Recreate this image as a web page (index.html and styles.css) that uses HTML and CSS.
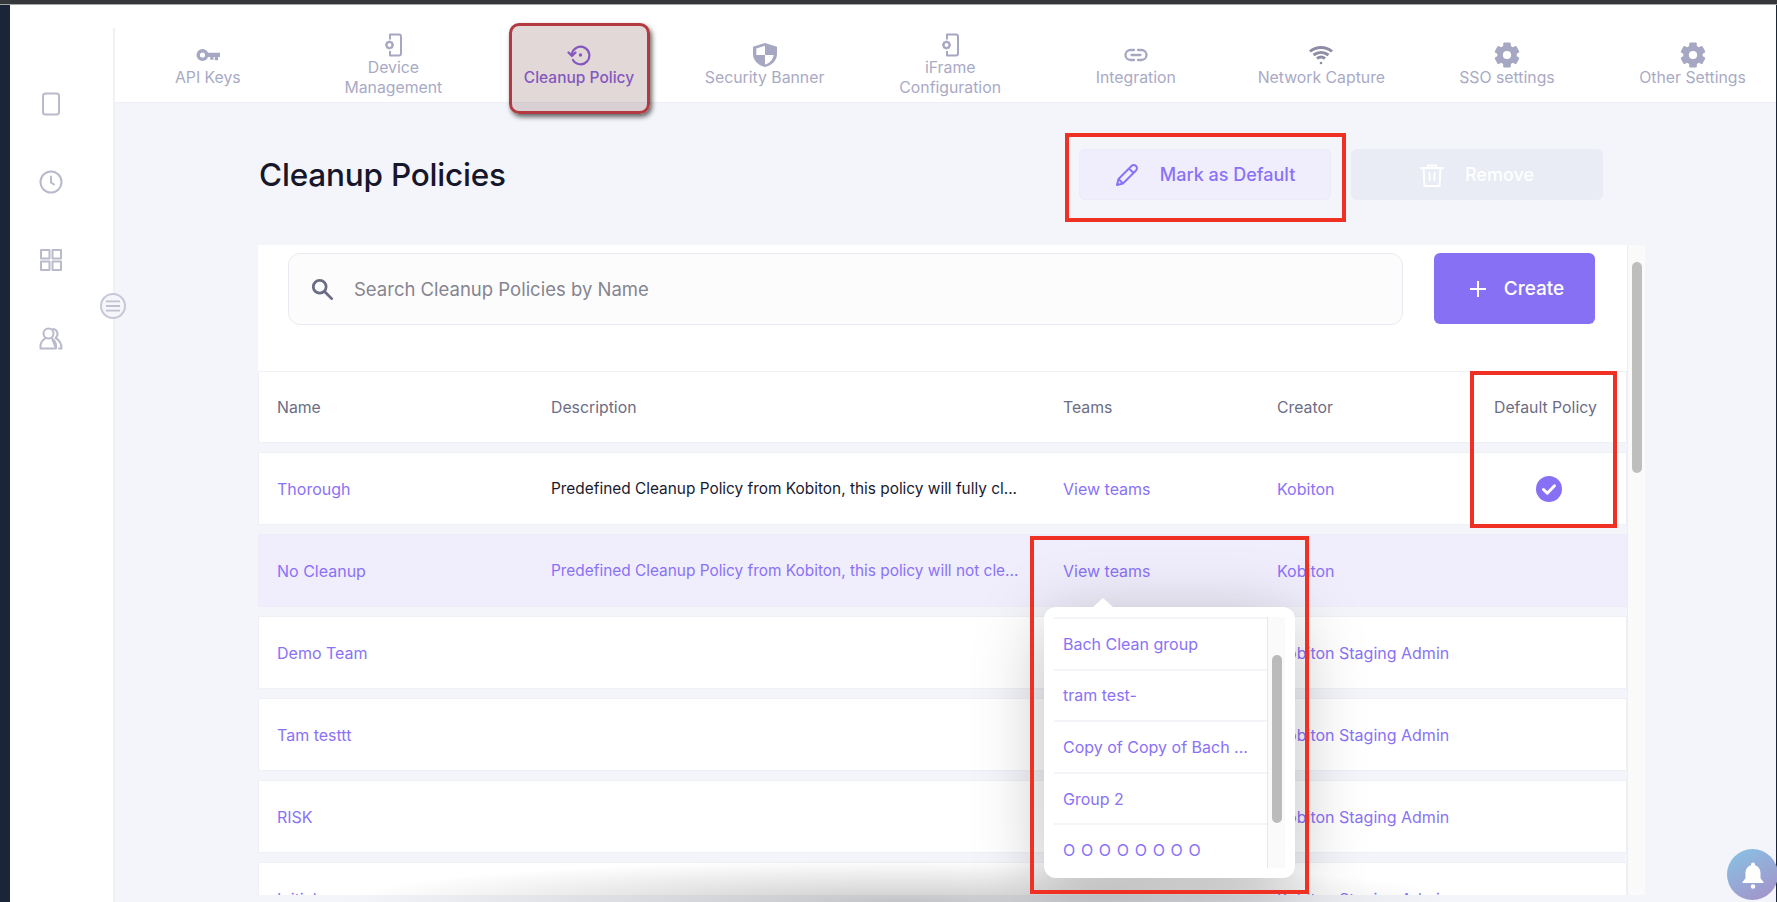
FILE: index.html
```html
<!DOCTYPE html>
<html lang="en">
<head>
<meta charset="utf-8">
<title>Cleanup Policies</title>
<link rel="stylesheet" href="styles.css">
</head>
<body>
<svg class="defs" width="0" height="0" aria-hidden="true">
  <symbol id="gear" viewBox="0 0 24 24">
    <circle cx="12" cy="12" r="9"/>
    <rect x="8.500" y="0.500" width="7" height="23" rx="1.200"/>
    <rect x="8.500" y="0.500" width="7" height="23" rx="1.200" transform="rotate(60 12 12)"/>
    <rect x="8.500" y="0.500" width="7" height="23" rx="1.200" transform="rotate(120 12 12)"/>
    <circle cx="12" cy="12" r="3.800" fill="#fff"/>
  </symbol>
  <symbol id="device" viewBox="0 0 20 24">
    <path d="M7 1.500h9a2 2 0 0 1 2 2v17a2 2 0 0 1-2 2H7" fill="none" stroke="currentColor" stroke-width="2" stroke-linecap="round"/>
    <path d="M7 1.500v5M7 18v4.500" fill="none" stroke="currentColor" stroke-width="2"/>
    <circle cx="6.500" cy="12" r="3" fill="none" stroke="currentColor" stroke-width="2.200"/>
    <path d="M6.500 7.500v1.500M6.500 15v1.500M2 12h1.500M9.500 12H11M3.400 8.900l1 1M8.600 14.100l1 1M3.400 15.100l1-1M8.600 9.900l1-1" stroke="currentColor" stroke-width="1.500"/>
  </symbol>
</svg>
<div class="frame">
  <div class="topbar"></div>
  <div class="body">
    <div class="edge"></div>
    <aside class="rail">
      <svg class="rail-icon" viewBox="0 0 24 24"><rect x="4" y="1.500" width="16" height="21" rx="2.500"/></svg>
      <svg class="rail-icon" viewBox="0 0 24 24"><circle cx="12" cy="12" r="10.500"/><path d="M12 6.500V12.500l3 2"/></svg>
      <svg class="rail-icon" viewBox="0 0 24 24"><rect x="2" y="2" width="8.500" height="8.500"/><rect x="13.500" y="2" width="8.500" height="8.500"/><rect x="2" y="13.500" width="8.500" height="8.500"/><rect x="13.500" y="13.500" width="8.500" height="8.500"/></svg>
      <svg class="rail-icon" viewBox="0 0 24 24"><circle cx="9.500" cy="7.500" r="5"/><path d="M1.500 22.500v-2.500c0-4 3-6.500 4.500-7.500M13 12.500c1.500 1 4 3.500 4 7.500v2.500zM1.500 22.500H17"/><path d="M14 3a5 5 0 0 1 2.500 9c3 1.500 6 4 6 10.500H20"/></svg>
    </aside>
    <main class="main">
      <div class="shell">
        <nav class="nav">
          <div class="tab">
            <svg class="tab-icon key" viewBox="0 0 24 14"><circle cx="6.500" cy="7" r="4.300"/><path d="M10.500 4.800h13.500v4.200h-2v3.300h-3.200V9h-1.300v2.800h-3.200V9h-3.800z" class="solid"/></svg>
            <span>API Keys</span>
          </div>
          <div class="tab">
            <svg class="tab-icon dev"><use href="#device"/></svg>
            <span>Device<br>Management</span>
          </div>
          <div class="tab tab-active">
            <svg class="tab-icon hist" viewBox="0 0 24 24"><path d="M5 10.500a8.800 8.800 0 1 1 1 6.500"/><path d="M1.500 9.500l3.500 3.500 3.500-3.500"/><circle cx="13.500" cy="12" r="1.700" class="dot"/></svg>
            <span>Cleanup Policy</span>
          </div>
          <div class="tab">
            <svg class="tab-icon" viewBox="3 1 18 22" preserveAspectRatio="none"><path d="M12 1L3 4.500V11c0 6 4 10.500 9 12 5-1.500 9-6 9-12V4.500z" class="solid"/><path d="M12 3.500v8.500H5.500V6zM12 12h6.500c-.5 4.500-3 7.500-6.500 8.800z" fill="#fff"/></svg>
            <span>Security Banner</span>
          </div>
          <div class="tab">
            <svg class="tab-icon dev"><use href="#device"/></svg>
            <span>iFrame<br>Configuration</span>
          </div>
          <div class="tab">
            <svg class="tab-icon link" viewBox="0 0 24 14"><path d="M10 2H6.500a5 5 0 0 0 0 10H10M14 2h3.500a5 5 0 0 1 0 10H14M7.500 7h9"/></svg>
            <span>Integration</span>
          </div>
          <div class="tab">
            <svg class="tab-icon wifi" viewBox="0 0 24 20"><path d="M1 6.500C7 1 17 1 23 6.500M4.500 10c4.500-3.500 10.500-3.500 15 0M8 13.500c2.500-1.800 5.500-1.800 8 0"/><circle cx="12" cy="18" r="1.300"/></svg>
            <span>Network Capture</span>
          </div>
          <div class="tab">
            <svg class="tab-icon gear"><use href="#gear"/></svg>
            <span>SSO settings</span>
          </div>
          <div class="tab">
            <svg class="tab-icon gear"><use href="#gear"/></svg>
            <span>Other Settings</span>
          </div>
        </nav>
        <section class="content">
          <header class="head">
            <h1 class="title">Cleanup Policies</h1>
            <div class="actions">
              <button class="btn btn-mark">
                <svg class="btn-icon" viewBox="0 0 24 24"><path d="M2 22l1.500-6L16.500 3a3 3 0 0 1 4.500 4.500L8 20.500zM14 5.500L18.500 10M3.500 16L8 20.500"/></svg>
                <span>Mark as Default</span>
              </button>
              <button class="btn btn-remove">
                <svg class="btn-icon" viewBox="0 0 24 24"><path d="M1 5h22M8 5V2.500h8V5M3.500 5l1 18h15l1-18M9.500 10v7M14.500 10v7"/></svg>
                <span>Remove</span>
              </button>
            </div>
          </header>
          <div class="panel">
            <div class="table">
              <div class="toolbar">
                <div class="search">
                  <svg class="search-icon" viewBox="0 0 24 24"><circle cx="9.500" cy="9.500" r="7"/><path d="M15 15l7.500 7.500"/></svg>
                  <span>Search Cleanup Policies by Name</span>
                </div>
                <button class="create">
                  <svg class="plus" viewBox="0 0 18 18"><path d="M9 1v16M1 9h16"/></svg>
                  <span>Create</span>
                </button>
              </div>
              <div class="row row-head">
                <div>Name</div><div>Description</div><div>Teams</div><div>Creator</div><div>Default Policy</div>
              </div>
              <div class="row">
                <div class="lnk">Thorough</div>
                <div class="desc">Predefined Cleanup Policy from Kobiton, this policy will fully cl...</div>
                <div class="lnk">View teams</div>
                <div class="lnk">Kobiton</div>
                <div><svg class="check" viewBox="0 0 26 26"><circle cx="13" cy="13" r="13"/><path d="M7.500 13.500l3.800 3.700 7.200-7.400"/></svg></div>
              </div>
              <div class="row row-hover">
                <div class="lnk">No Cleanup</div>
                <div class="desc lnk">Predefined Cleanup Policy from Kobiton, this policy will not cle...</div>
                <div class="lnk">View teams</div>
                <div class="lnk">Kobiton</div>
                <div></div>
              </div>
              <div class="row"><div class="lnk">Demo Team</div><div></div><div></div><div class="lnk">Kobiton Staging Admin</div><div></div></div>
              <div class="row"><div class="lnk">Tam testtt</div><div></div><div></div><div class="lnk">Kobiton Staging Admin</div><div></div></div>
              <div class="row"><div class="lnk">RISK</div><div></div><div></div><div class="lnk">Kobiton Staging Admin</div><div></div></div>
              <div class="row"><div class="lnk">Initial</div><div></div><div></div><div class="lnk">Kobiton Staging Admin</div><div></div></div>
            </div>
            <div class="track"><div class="thumb"></div></div>
          </div>
        </section>
      </div>
    </main>
    <div class="edge-right"></div>
  </div>
</div>

<div class="collapse"><svg viewBox="0 0 12 10"><path d="M0 1h12M0 5h12M0 9h12"/></svg></div>
<div class="bottom-shade"></div>

<div class="popup">
  <div class="pop-list">
    <div class="pop-item">Bach Clean group</div>
    <div class="pop-item">tram test-</div>
    <div class="pop-item">Copy of Copy of Bach ...</div>
    <div class="pop-item">Group 2</div>
    <div class="pop-item pop-spaced">O O O O O O O O</div>
  </div>
  <div class="pop-track"><div class="pop-thumb"></div></div>
</div>

<div class="mark mark-tab"></div>
<div class="mark mark-default"></div>
<div class="mark mark-policy"></div>
<div class="mark mark-teams"></div>

<div class="bell"><svg viewBox="0 0 24 28"><path d="M12 1.500a2 2 0 0 1 2 2v.8c3.500 1 5.500 4 5.500 8v5l3 3.700v1H1.500v-1l3-3.700v-5c0-4 2-7 5.500-8v-.8a2 2 0 0 1 2-2z"/><circle cx="12" cy="25.500" r="2.200"/></svg></div>
</body>
</html>
```
FILE: styles.css
```css
* { box-sizing: border-box; }
html, body { margin: 0; padding: 0; }
body {
  position: relative;
  width: 1777px;
  height: 902px;
  overflow: hidden;
  background: #fff;
  font-family: Inter, "Noto Sans", sans-serif;
  color: #1a1a2e;
}
.defs { position: absolute; }

.frame { display: flex; flex-direction: column; height: 100%; }
.topbar { height: 5px; background: #35373b; border-bottom: 1px solid #a5a6aa; flex: none; }
.body { display: flex; flex: 1; min-height: 0; }
.edge { width: 10px; background: #1b2538; flex: none; }
.edge-right { width: 1px; background: #1b2538; flex: none; }

.rail {
  width: 103px;
  flex: none;
  display: flex;
  flex-direction: column;
  align-items: center;
  gap: 54px;
  padding: 87px 21px 0 0;
}
.rail-icon {
  width: 24px;
  height: 24px;
  fill: none;
  stroke: #b9bacb;
  stroke-width: 2;
  stroke-linejoin: round;
  stroke-linecap: round;
}

.main { flex: 1; min-width: 0; display: flex; flex-direction: column; padding-top: 23px; }
.shell {
  flex: 1;
  min-height: 0;
  overflow: hidden;
  border-left: 2px solid #f0f1f6;
  background: #f4f5fa;
}

.nav {
  display: grid;
  grid-template-columns: repeat(9, 185.6px);
  height: 75px;
  background: #fff;
  border-bottom: 1px solid #eeeff5;
}
.tab {
  display: flex;
  flex-direction: column;
  align-items: center;
  justify-content: center;
  gap: 1px;
  color: #a9aac5;
  font-size: 15.800px;
  line-height: 20px;
  text-align: center;
  white-space: nowrap;
}
.tab-active { color: #8a5fe0; font-weight: 500; font-size: 15.500px; }
.tab-icon {
  width: 24px;
  height: 24px;
  flex: none;
  fill: #a6a7c2;
  stroke: none;
}
.tab-icon.key { fill: none; stroke: #a6a7c2; stroke-width: 3.400; }
.tab-icon.key .solid { fill: #a6a7c2; stroke: none; }
.tab-icon.dev { color: #a6a7c2; fill: none; }
.tab-icon.hist { fill: none; stroke: #8a5fe0; stroke-width: 2.200; stroke-linecap: round; stroke-linejoin: round; }
.tab-icon.hist .dot { fill: #8a5fe0; stroke: none; }
.tab-icon.link { fill: none; stroke: #a6a7c2; stroke-width: 2.300; stroke-linecap: round; }
.tab-icon.wifi { fill: none; stroke: #8d8da5; stroke-width: 3; }
.tab-icon.wifi circle { fill: #8d8da5; stroke: none; }
.tab-icon.gear { width: 26px; height: 26px; margin: -1px 0; }
.tab-icon .solid { fill: #a6a7c2; }

.content { padding-left: 143px; }
.head {
  display: flex;
  align-items: center;
  justify-content: space-between;
  width: 1387px;
  height: 51px;
  margin: 46px 0 45px;
  padding: 0 42px 0 1px;
}
.title { margin: 0; font-size: 31.500px; font-weight: 500; line-height: 40px; color: #17172b; letter-spacing: -0.2px; }
.actions { display: flex; gap: 20px; }
.btn {
  display: flex;
  align-items: center;
  justify-content: center;
  gap: 21px;
  width: 252px;
  height: 51px;
  border-radius: 6px;
  font: 500 18px/24px Inter, "Noto Sans", sans-serif;
}
.btn-icon { width: 24px; height: 24px; fill: none; stroke: currentColor; stroke-width: 2; stroke-linejoin: round; stroke-linecap: round; }
.btn-mark { background: #f0eefc; border: 1px solid #ecebf8; color: #8a72f7; }
.btn-remove { background: #e9ecf5; border: 0; color: #fff; }

.panel { display: flex; width: 1387px; height: 650px; }
.table { flex: 1; min-width: 0; overflow: hidden; }
.track { width: 18px; flex: none; background: #fafafa; border-left: 1px solid #eeeef2; padding: 17px 3px 0 4px; }
.thumb { height: 211px; border-radius: 5px; background: #bebebe; }

.toolbar {
  display: flex;
  align-items: flex-start;
  gap: 31px;
  height: 126px;
  padding: 8px 0 0 30px;
  background: #fff;
}
.search {
  display: flex;
  align-items: center;
  gap: 21px;
  width: 1115px;
  height: 72px;
  padding-left: 22px;
  border: 1px solid #e9ebf3;
  border-radius: 12px;
  background: #fcfcfd;
  color: #85858f;
  font-size: 18.500px;
}
.search-icon { width: 22px; height: 22px; fill: none; stroke: #6a6b85; stroke-width: 3; stroke-linecap: round; }
.create {
  display: flex;
  align-items: center;
  justify-content: center;
  gap: 17px;
  width: 161px;
  height: 71px;
  padding: 0 0 0 4px;
  border: 0;
  border-radius: 6px;
  background: #8870f5;
  color: #fff;
  font: 500 19px/24px Inter, "Noto Sans", sans-serif;
}
.plus { width: 18px; height: 18px; fill: none; stroke: #fff; stroke-width: 2; }

.row {
  display: grid;
  grid-template-columns: 274px 512px 214px 217px 1fr;
  align-items: center;
  height: 73px;
  margin-bottom: 9px;
  padding-left: 18px;
  background: #fff;
  border: 1px solid #eff0f5;
  font-size: 16px;
  white-space: nowrap;
}
.row-head { height: 72px; color: #6c6d85; font-size: 15.800px; }
.row-hover { background: #f0eefc; border-color: #edecf8; }
.lnk { color: #8a72f7; }
.desc { font-size: 15.400px; }
.check { display: block; width: 26px; height: 26px; margin-left: 42px; fill: #8870f5; }
.check path { fill: none; stroke: #fff; stroke-width: 3; stroke-linecap: round; stroke-linejoin: round; }

.collapse {
  position: absolute;
  left: 100px;
  top: 293px;
  display: flex;
  align-items: center;
  justify-content: center;
  width: 26px;
  height: 26px;
  border: 2px solid #c6c8d9;
  border-radius: 50%;
  background: #f6f6fa;
}
.collapse svg { width: 14px; height: 12px; fill: none; stroke: #bfc1d3; stroke-width: 1.600; }

.bottom-shade {
  position: absolute;
  left: 320px;
  top: 860px;
  width: 1120px;
  height: 42px;
  background: radial-gradient(ellipse 50% 100% at 52% 100%, rgba(0,0,0,.2), rgba(0,0,0,0));
  pointer-events: none;
}

.popup {
  position: absolute;
  left: 1044px;
  top: 607px;
  display: flex;
  width: 251px;
  height: 271px;
  padding: 10px;
  border-radius: 12px;
  background: #fff;
  box-shadow: 0 14px 70px rgba(0,0,0,.26);
  color: #8a72f7;
  font-size: 16px;
}
.popup::before {
  content: "";
  position: absolute;
  left: 49px;
  top: -9px;
  border-left: 10px solid transparent;
  border-right: 10px solid transparent;
  border-bottom: 9px solid #fff;
}
.pop-list { flex: 1; min-width: 0; overflow: hidden; }
.pop-item {
  display: flex;
  align-items: center;
  height: 51.600px;
  padding-left: 9px;
  border-top: 2px solid #f4f4f8;
  white-space: nowrap;
}
.pop-spaced { letter-spacing: 0.600px; }
.pop-track { width: 18px; flex: none; background: #fafafa; border-left: 1px solid #e8e8ec; padding: 38px 3px 0 4px; }
.pop-thumb { height: 168px; border-radius: 5px; background: #bbb; }

.mark { position: absolute; border: 4px solid #ef3124; pointer-events: none; }
.mark-default { left: 1065px; top: 133px; width: 281px; height: 89px; }
.mark-policy { left: 1470px; top: 371px; width: 147px; height: 157px; }
.mark-teams { left: 1030px; top: 536px; width: 279px; height: 358px; }
.mark-tab {
  left: 509px;
  top: 23px;
  width: 141px;
  height: 91px;
  border: 3px solid #b23a40;
  border-radius: 10px;
  background: rgba(110,60,60,.2);
  box-shadow: 2px 3px 5px rgba(0,0,0,.6);
}

.bell {
  position: absolute;
  left: 1727px;
  top: 849px;
  display: flex;
  align-items: center;
  justify-content: center;
  width: 51px;
  height: 51px;
  border-radius: 50%;
  background: linear-gradient(150deg, #87c4e4, #a58fc8);
}
.bell svg { width: 24px; height: 28px; fill: #fff; }
```
